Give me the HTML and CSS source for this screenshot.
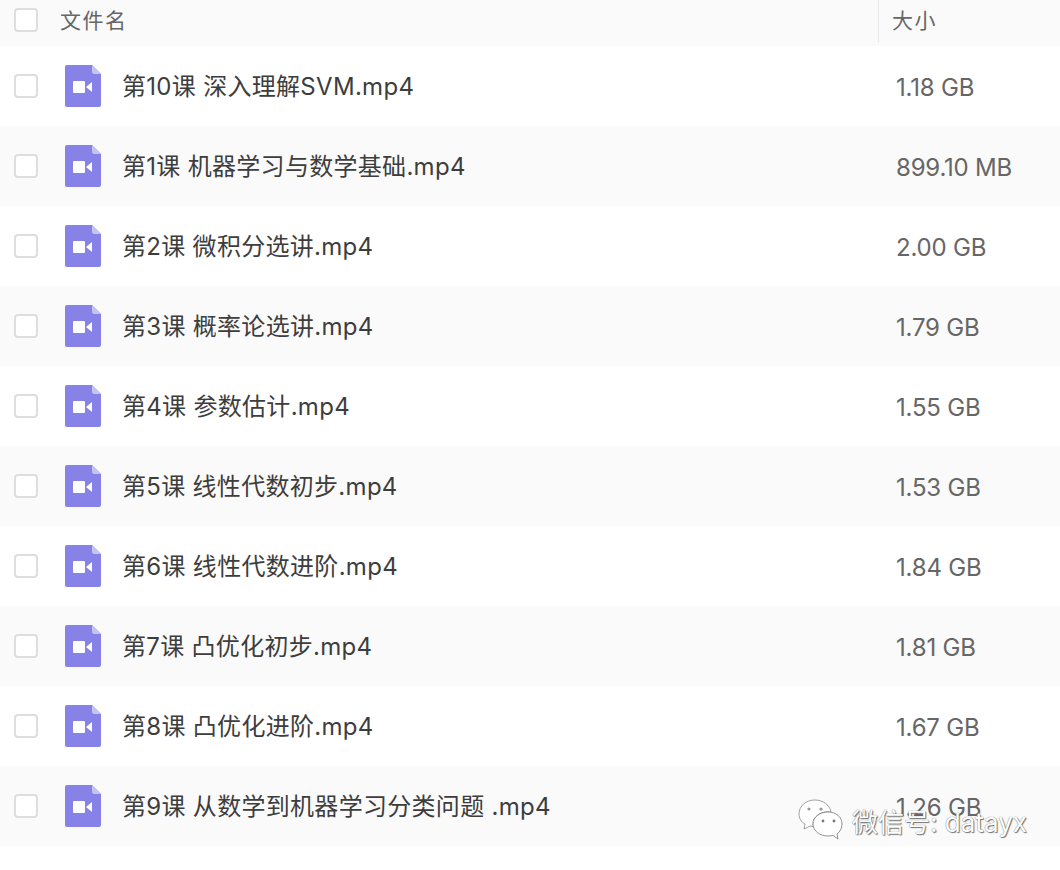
FILE: index.html
```html
<!DOCTYPE html>
<html lang="zh-CN">
<head>
    <meta charset="UTF-8">
    <title>文件列表</title>
    <link rel="stylesheet" href="styles.css">
</head>
<body>

<svg class="sprite" width="0" height="0">
    <symbol id="videoFile" viewBox="0 0 36 42">
        <path d="M2 0H27L36 9V40a2 2 0 0 1-2 2H2a2 2 0 0 1-2-2V2a2 2 0 0 1 2-2Z" fill="#8682E8"/>
        <path d="M27 0L36 9H29a2 2 0 0 1-2-2Z" fill="#C5C3F4"/>
        <rect x="8" y="16" width="12" height="12" rx="1" fill="#fff"/>
        <path d="M21 22L27 17V27Z" fill="#fff"/>
    </symbol>
</svg>

<div class="cabecalho">
    <span class="caixa"></span>
    <span class="titulo-nome">文件名</span>
    <span class="titulo-tamanho">大小</span>
</div>

<div class="linha">
    <span class="caixa"></span>
    <svg class="icone"><use href="#videoFile"/></svg>
    <span class="nome">第10课 深入理解SVM.mp4</span>
    <span class="tamanho">1.18 GB</span>
</div>
<div class="linha">
    <span class="caixa"></span>
    <svg class="icone"><use href="#videoFile"/></svg>
    <span class="nome">第1课 机器学习与数学基础.mp4</span>
    <span class="tamanho">899.10 MB</span>
</div>
<div class="linha">
    <span class="caixa"></span>
    <svg class="icone"><use href="#videoFile"/></svg>
    <span class="nome">第2课 微积分选讲.mp4</span>
    <span class="tamanho">2.00 GB</span>
</div>
<div class="linha">
    <span class="caixa"></span>
    <svg class="icone"><use href="#videoFile"/></svg>
    <span class="nome">第3课 概率论选讲.mp4</span>
    <span class="tamanho">1.79 GB</span>
</div>
<div class="linha">
    <span class="caixa"></span>
    <svg class="icone"><use href="#videoFile"/></svg>
    <span class="nome">第4课 参数估计.mp4</span>
    <span class="tamanho">1.55 GB</span>
</div>
<div class="linha">
    <span class="caixa"></span>
    <svg class="icone"><use href="#videoFile"/></svg>
    <span class="nome">第5课 线性代数初步.mp4</span>
    <span class="tamanho">1.53 GB</span>
</div>
<div class="linha">
    <span class="caixa"></span>
    <svg class="icone"><use href="#videoFile"/></svg>
    <span class="nome">第6课 线性代数进阶.mp4</span>
    <span class="tamanho">1.84 GB</span>
</div>
<div class="linha">
    <span class="caixa"></span>
    <svg class="icone"><use href="#videoFile"/></svg>
    <span class="nome">第7课 凸优化初步.mp4</span>
    <span class="tamanho">1.81 GB</span>
</div>
<div class="linha">
    <span class="caixa"></span>
    <svg class="icone"><use href="#videoFile"/></svg>
    <span class="nome">第8课 凸优化进阶.mp4</span>
    <span class="tamanho">1.67 GB</span>
</div>
<div class="linha">
    <span class="caixa"></span>
    <svg class="icone"><use href="#videoFile"/></svg>
    <span class="nome">第9课 从数学到机器学习分类问题 .mp4</span>
    <span class="tamanho">1.26 GB</span>
</div>

<!-- Marca d'água -->
<div class="marca">
    <svg class="marca-icone" viewBox="0 0 46 42">
        <path d="M17 1C8 1 1 7 1 15c0 4 2 8 6 10l-1 5 6-3c1 .5 3 .5 4 .5" fill="#fff" stroke="#8a8a8a" stroke-width=".8"/>
        <path d="M17 1c8 0 15 5 16 12-1-.2-2-.2-3-.2-8 0-15 5-15 12 0 1 .2 2 .5 3" fill="#fff" stroke="#8a8a8a" stroke-width=".8"/>
        <path d="M30 13c-8 0-15 5-15 12s7 12 15 12c2 0 3-.2 5-.7l5 3.700-1-5c3-2 5-6 5-10 0-7-6-12-14-12Z" fill="#fff" stroke="#777" stroke-width=".8"/>
        <circle cx="11" cy="10" r="1.600" fill="#999"/>
        <circle cx="23" cy="10" r="1.600" fill="#999"/>
        <circle cx="25" cy="22" r="1.400" fill="#777"/>
        <circle cx="36" cy="22" r="1.400" fill="#777"/>
    </svg>
    <span class="marca-texto">微信号: datayx</span>
</div>

</body>
</html>
```

FILE: styles.css
```css
/* Estilos gerais */
body {
    margin: 0;
    background-color: #fff;
    font-family: Inter, "Noto Sans CJK SC", sans-serif;
    height: 870px;
    overflow: hidden;
    position: relative;
}

.sprite {
    position: absolute;
}

/* Cabeçalho */
.cabecalho {
    display: flex;
    align-items: center;
    height: 46px;
    background-color: #fafafa;
    color: #666;
    font-size: 21px;
}

.titulo-nome {
    margin-left: 22px;
    width: 818px;
    height: 42px;
    line-height: 42px;
    margin-top: -4px;
    letter-spacing: 1.5px;
}

.titulo-tamanho {
    height: 42px;
    line-height: 42px;
    margin-top: -4px;
    padding-left: 13px;
    border-left: 1px solid #e8e8e8;
    letter-spacing: 1.5px;
}

/* Linhas */
.linha {
    display: flex;
    align-items: center;
    height: 80px;
}

.linha:nth-of-type(odd) {
    background-color: #fafafa;
}

.caixa {
    flex: none;
    width: 20px;
    height: 20px;
    margin-left: 14px;
    border: 2px solid #dedede;
    border-radius: 4px;
    background-color: #fff;
}

.cabecalho .caixa {
    margin-top: -6px;
}

.icone {
    flex: none;
    width: 36px;
    height: 42px;
    margin-left: 27px;
    margin-right: 21px;
}

.nome {
    width: 774px;
    font-size: 24px;
    letter-spacing: .3px;
    line-height: 30px;
    margin-top: 2px;
    color: #3d3d3d;
    white-space: pre;
}

.tamanho {
    font-size: 24px;
    letter-spacing: -.2px;
    line-height: 30px;
    margin-top: 4px;
    color: #666;
}

/* Marca d'água */
.marca {
    position: absolute;
    left: 798px;
    top: 799px;
    display: flex;
    align-items: center;
    gap: 8px;
}

.marca-icone {
    width: 46px;
    height: 42px;
}

.marca-texto {
    font-size: 26px;
    color: #fff;
    white-space: nowrap;
    text-shadow: 0 0 1px #555, 1px 1px 1px #777;
}
```
